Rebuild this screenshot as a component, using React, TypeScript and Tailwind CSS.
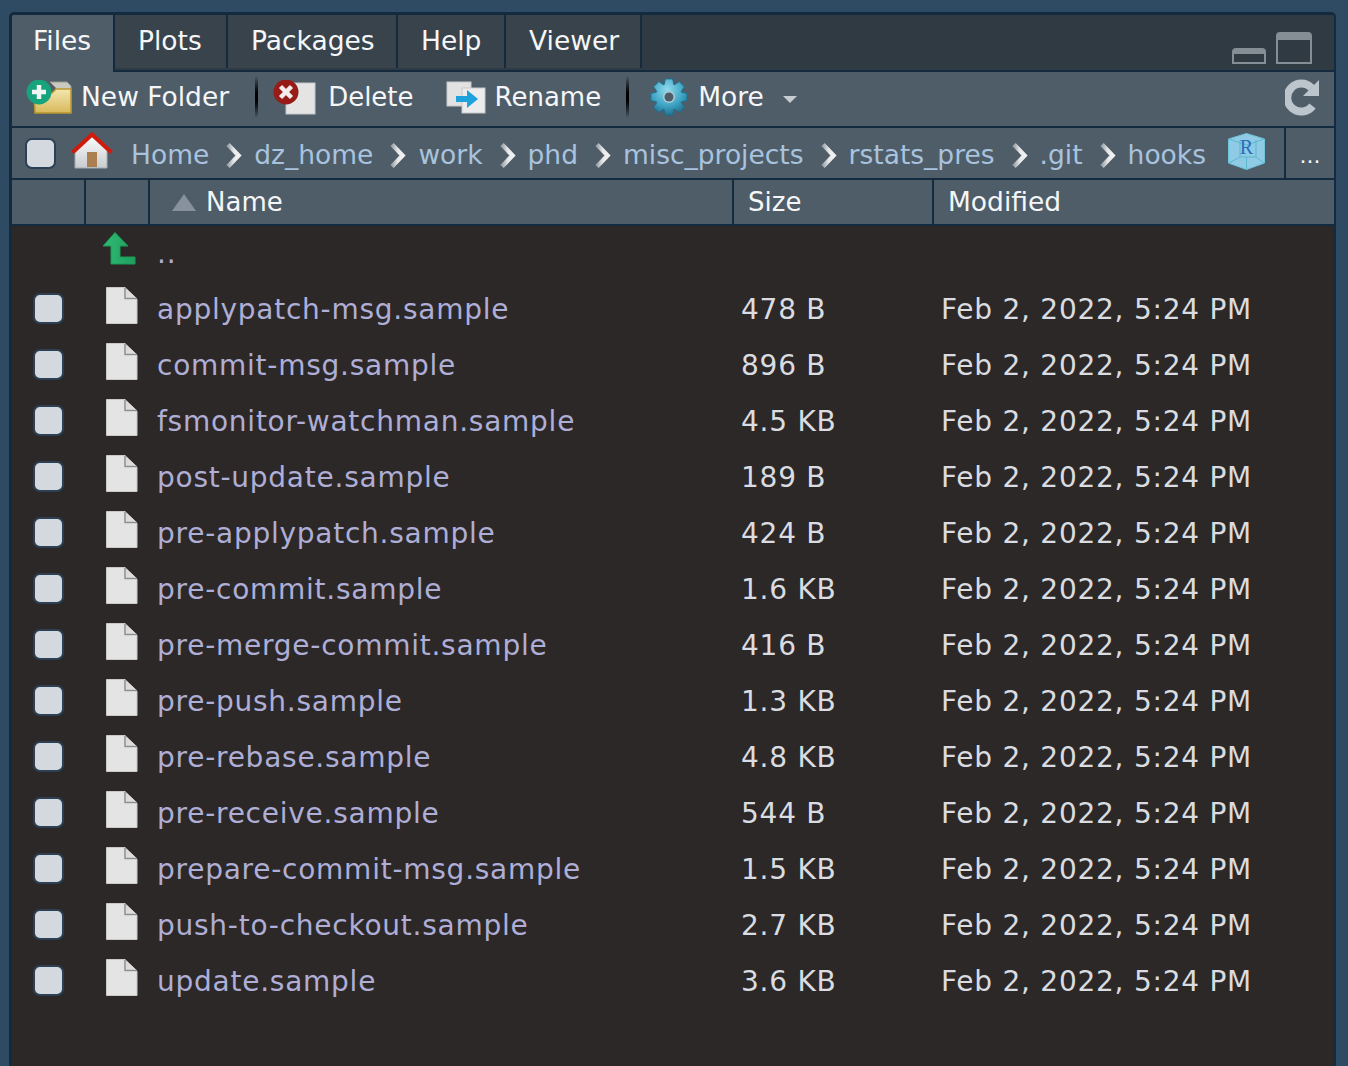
import React from 'react'

const files = [
  ['applypatch-msg.sample', '478 B'],
  ['commit-msg.sample', '896 B'],
  ['fsmonitor-watchman.sample', '4.5 KB'],
  ['post-update.sample', '189 B'],
  ['pre-applypatch.sample', '424 B'],
  ['pre-commit.sample', '1.6 KB'],
  ['pre-merge-commit.sample', '416 B'],
  ['pre-push.sample', '1.3 KB'],
  ['pre-rebase.sample', '4.8 KB'],
  ['pre-receive.sample', '544 B'],
  ['prepare-commit-msg.sample', '1.5 KB'],
  ['push-to-checkout.sample', '2.7 KB'],
  ['update.sample', '3.6 KB'],
]

const crumbs = ['dz_home', 'work', 'phd', 'misc_projects', 'rstats_pres', '.git', 'hooks']

function Checkbox({ className = '' }: { className?: string }) {
  return <div className={`h-[31px] w-[31px] shrink-0 rounded-[7px] border-2 border-[#2b4054] bg-[#d3d9de] ${className}`} />
}

function Separator({ className = '' }: { className?: string }) {
  return <div className={`h-[42px] w-[3px] shrink-0 bg-gradient-to-b from-[#4f5d69] via-black to-[#4f5d69] ${className}`} />
}

function FileIcon({ className = '' }: { className?: string }) {
  return (
    <svg width="32" height="37" viewBox="0 0 32 37" className={`shrink-0 ${className}`}>
      <path d="M0.5 0.5H19L31 12V36.5H0.5Z" fill="#e4e4e4" stroke="#c9c9c9" />
      <path d="M19 1V11.5H31" fill="#dcdcdc" stroke="#8f8f8f" strokeWidth="1.5" />
    </svg>
  )
}

function Chevron() {
  return (
    <svg width="17" height="29" viewBox="0 0 17 29" className="shrink-0">
      <defs>
        <linearGradient id="chev" x1="0" y1="0" x2="1" y2="0">
          <stop offset="0" stopColor="#9ba3aa" />
          <stop offset="0.55" stopColor="#e8e8e8" />
          <stop offset="1" stopColor="#f2f2f2" />
        </linearGradient>
      </defs>
      <path d="M2 3.5L12.5 14.5L2 25.5" fill="none" stroke="url(#chev)" strokeWidth="4.5" />
    </svg>
  )
}

function NewFolderIcon() {
  return (
    <svg width="46" height="34" viewBox="0 0 46 34" className="shrink-0">
      <defs>
        <linearGradient id="folder" x1="0" y1="0" x2="0" y2="1">
          <stop offset="0" stopColor="#f3e6b0" />
          <stop offset="1" stopColor="#d8b95a" />
        </linearGradient>
      </defs>
      <path d="M24 2H41L45 6V32H30V8Z" fill="#c9c9c0" stroke="#9a9a8c" />
      <path d="M8 13H26L30 9H45V33H9Z" fill="url(#folder)" stroke="#b8962f" strokeWidth="1.5" />
      <circle cx="13" cy="12" r="12.5" fill="#17a37c" />
      <path d="M13 5V19M6 12H20" stroke="#f0f5f3" strokeWidth="4.5" />
    </svg>
  )
}

function DeleteIcon() {
  return (
    <svg width="43" height="35" viewBox="0 0 43 35" className="shrink-0">
      <rect x="13" y="3" width="29" height="31" fill="#e4e4e4" stroke="#c4c8cb" />
      <circle cx="13" cy="12" r="12.5" fill="#971c18" />
      <path d="M7.5 6.5L18.5 17.5M18.5 6.5L7.5 17.5" stroke="#f2ecec" strokeWidth="4.5" />
    </svg>
  )
}

function RenameIcon() {
  return (
    <svg width="40" height="33" viewBox="0 0 40 33" className="shrink-0">
      <rect x="1" y="1" width="24" height="24" fill="#e2e2e2" stroke="#c8c8c8" />
      <rect x="16" y="7" width="23" height="25" fill="#ececec" stroke="#c8c8c8" />
      <path d="M10 15H21V9L32 18L21 27V21H10Z" fill="#1da2dc" />
    </svg>
  )
}

// 8 teeth round a centre at (19, 19)
function gearPath() {
  const pts: string[] = []
  for (let i = 0; i < 8; i++) {
    const a = (i * Math.PI) / 4 - Math.PI / 2
    const p = (r: number, d: number) => `${(19 + r * Math.cos(a + d)).toFixed(1)} ${(19 + r * Math.sin(a + d)).toFixed(1)}`
    pts.push(p(13.5, -0.36), p(18.5, -0.2), p(18.5, 0.2), p(13.5, 0.36))
  }
  return 'M' + pts.join('L') + 'Z'
}

function GearIcon() {
  return (
    <svg width="38" height="38" viewBox="0 0 38 38" className="shrink-0">
      <defs>
        <radialGradient id="gear" cx="0.45" cy="0.3" r="0.8">
          <stop offset="0" stopColor="#8fdcec" />
          <stop offset="0.55" stopColor="#3fa4c4" />
          <stop offset="1" stopColor="#17607f" />
        </radialGradient>
      </defs>
      <path d={gearPath()} fill="url(#gear)" stroke="#1f6f90" strokeLinejoin="round" strokeWidth="1" />
      <circle cx="19" cy="19" r="6" fill="#a9ccd8" />
      <circle cx="19" cy="19" r="4.5" fill="#4f5d69" />
    </svg>
  )
}

function RefreshIcon() {
  return (
    <svg width="35" height="37" viewBox="0 0 35 37" className="shrink-0">
      <path d="M26.5 9A14 14 0 1 0 27.5 27" fill="none" stroke="#bcc4cc" strokeWidth="8" />
      <path d="M34 1V17H18Z" fill="#bcc4cc" />
    </svg>
  )
}

function HomeIcon() {
  return (
    <svg width="42" height="38" viewBox="0 0 42 38" className="shrink-0">
      <defs>
        <linearGradient id="wall" x1="0" y1="0" x2="0" y2="1">
          <stop offset="0" stopColor="#fbfbfb" />
          <stop offset="1" stopColor="#c9ccce" />
        </linearGradient>
      </defs>
      <path d="M21 4L36 17V36H4V17Z" fill="url(#wall)" stroke="#a4abb1" />
      <rect x="16" y="20" width="10" height="15" fill="#ab7f4f" />
      <path d="M1.5 20.5L21 2.5L40.5 20.5" fill="none" stroke="#d01a0c" strokeWidth="4" />
    </svg>
  )
}

function RProjectIcon() {
  return (
    <svg width="37" height="37" viewBox="0 0 37 37" className="shrink-0">
      <path d="M18.5 0.5L36.5 6V30L18.5 36.5L0.5 30V6Z" fill="#8fcbe4" stroke="#6ec4dc" />
      <path d="M1 6L18.5 12L36 6M1 30L12 24H28L36 30M18.5 36V24M12 7V24M28 7V24" fill="none" stroke="#4fb3c9" strokeWidth="0.8" />
      <text x="18.5" y="21" textAnchor="middle" fontFamily="Liberation Serif" fontSize="20" fill="#2a6dbb">R</text>
    </svg>
  )
}

function UpIcon() {
  return (
    <svg width="34" height="34" viewBox="0 0 34 34" className="shrink-0">
      <defs>
        <linearGradient id="up" x1="0" y1="0" x2="1" y2="0">
          <stop offset="0" stopColor="#2fbb74" />
          <stop offset="1" stopColor="#1f9e5d" />
        </linearGradient>
      </defs>
      <path d="M13 0.5L26 14H18V25H33V32H9V14H1Z" fill="url(#up)" stroke="#1a9a58" />
    </svg>
  )
}

function Tab({ label, active = false, className }: { label: string; active?: boolean; className: string }) {
  return (
    <div
      className={`flex shrink-0 items-center border-r-2 border-[#142a3f] ${
        active ? 'h-[57px] bg-[#4f5d69] pb-[5px]' : 'h-[53px] bg-[#39434c] pb-[1px]'
      } ${className}`}
    >
      {label}
    </div>
  )
}

export default function App() {
  return (
    <div className="h-[1066px] overflow-hidden bg-[#2f4a63] pt-3 pl-[9px] pr-3 font-['DejaVu_Sans',sans-serif] text-[26.5px] text-[#f4f6f7]">
      <div className="flex h-[1054px] flex-col overflow-hidden rounded-t-[5px] border-t-[3px] border-r-2 border-l-[3px] border-[#142a3f]">
        <div className="flex h-[57px] shrink-0 items-start justify-between border-b-2 border-[#142a3f] bg-[#303a43]">
          <div className="flex items-start">
            <Tab label="Files" active className="w-[103px] pl-[21px]" />
            <Tab label="Plots" className="w-[113px] pl-[23px]" />
            <Tab label="Packages" className="w-[170px] pl-[23px]" />
            <Tab label="Help" className="w-[108px] pl-[23px]" />
            <Tab label="Viewer" className="w-[136px] pl-[23px]" />
          </div>
          <div className="mt-[17px] mr-[22px] flex items-end gap-[10px]">
            <div className="h-[16px] w-[34px] rounded-t-[4px] border-x-2 border-t-[6px] border-b-2 border-[#868e95] bg-[#303a43]" />
            <div className="h-[32px] w-[36px] rounded-t-[4px] border-x-2 border-t-[8px] border-b-2 border-[#868e95] bg-[#303a43]" />
          </div>
        </div>

        <div className="flex h-[56px] shrink-0 items-center border-b-2 border-[#142a3f] bg-[#4f5d69] pb-[4px] pl-[14px]">
          <NewFolderIcon />
          <span className="ml-[9px]">New Folder</span>
          <Separator className="ml-[26px]" />
          <span className="ml-[15px]"><DeleteIcon /></span>
          <span className="ml-[12px] text-[26px]">Delete</span>
          <span className="ml-[32px]"><RenameIcon /></span>
          <span className="ml-[9px] text-[26px]">Rename</span>
          <Separator className="ml-[25px]" />
          <span className="ml-[21px]"><GearIcon /></span>
          <span className="ml-[10px]">More</span>
          <div className="mt-1 ml-[19px] h-0 w-0 border-x-[7px] border-t-[7px] border-x-transparent border-t-[#c6ccd1]" />
          <span className="mr-[14px] ml-auto"><RefreshIcon /></span>
        </div>

        <div className="flex h-[52px] shrink-0 items-center border-b-2 border-[#142a3f] bg-[#4f5d69] text-[#a9c3de]">
          <Checkbox className="ml-[13px]" />
          <span className="ml-[15px] mb-1"><HomeIcon /></span>
          <span className="ml-[18px] pt-[3px]">Home</span>
          {crumbs.map((c) => (
            <React.Fragment key={c}>
              <span className="mr-[11px] ml-[17px] pt-[4px]"><Chevron /></span>
              <span className="pt-[3px]">{c}</span>
            </React.Fragment>
          ))}
          <span className="mb-[3px] ml-[22px]"><RProjectIcon /></span>
          <div className="ml-auto flex h-full w-[50px] items-center justify-center border-l-2 border-[#142a3f] pt-[5px] text-[22px] text-[#f4f6f7]">
            ...
          </div>
        </div>

        <div className="flex h-[46px] shrink-0 items-center border-b-2 border-[#142a3f] bg-[#4f5d69]">
          <div className="h-full w-[74px] border-r-2 border-[#142a3f]" />
          <div className="h-full w-[64px] border-r-2 border-[#142a3f]" />
          <div className="flex h-full w-[584px] items-center border-r-2 border-[#142a3f] pl-[22px]">
            <div className="h-0 w-0 border-x-[12px] border-b-[17px] border-x-transparent border-b-[#87919d]" />
            <span className="ml-[10px] text-[26px]">Name</span>
          </div>
          <div className="flex h-full w-[200px] items-center border-r-2 border-[#142a3f] pl-[14px] text-[26px]">Size</div>
          <div className="pl-[14px]">Modified</div>
        </div>

        <div className="flex-1 bg-[#2c2827] text-[28px] tracking-[0.75px]">
          <div className="flex h-14 items-center">
            <span className="mb-[10px] ml-[90px]"><UpIcon /></span>
            <span className="ml-[21px] text-[#aeaed6]">..</span>
          </div>
          {files.map(([name, size]) => (
            <div key={name} className="flex h-14 items-center">
              <Checkbox className="mb-[4px] ml-[21px]" />
              <FileIcon className="mb-[10px] ml-[42px]" />
              <span className="ml-[19px] w-[584px] shrink-0 text-[#aeaed6]">{name}</span>
              <span className="w-[200px] shrink-0 text-[#d9dce0]">{size}</span>
              <span className="text-[#d9dce0]">Feb 2, 2022, 5:24 PM</span>
            </div>
          ))}
        </div>
      </div>
    </div>
  )
}
